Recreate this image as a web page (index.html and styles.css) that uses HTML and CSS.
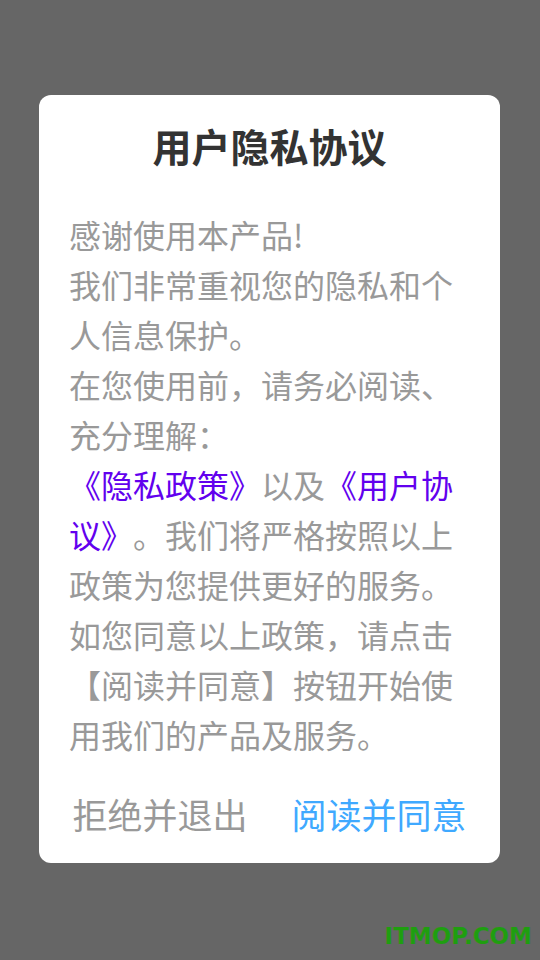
FILE: index.html
```html
<!DOCTYPE html>
<html lang="zh-CN">
<head>
<meta charset="utf-8">
<title>用户隐私协议</title>
<link rel="stylesheet" href="styles.css">
</head>
<body>
<div class="screen">
  <div class="dialog">
    <h1 class="title">用户隐私协议</h1>
    <div class="content">感谢使用本产品!<br>我们非常重视您的隐私和个人信息保护。<br>在您使用前，请务必阅读、充分理解：<br><span class="link">《隐私政策》</span>以及<span class="link">《用户协议》</span>。我们将严格按照以上政策为您提供更好的服务。如您同意以上政策，请点击【阅读并同意】按钮开始使用我们的产品及服务。</div>
    <div class="actions">
      <span class="btn btn-reject">拒绝并退出</span>
      <span class="btn btn-agree">阅读并同意</span>
    </div>
  </div>
  <div class="watermark">ITMOP.COM</div>
</div>
</body>
</html>
```

FILE: styles.css
```css
html, body {
  margin: 0;
  padding: 0;
}
body {
  background: #666666;
  font-family: "Noto Sans CJK SC", "Noto Sans", sans-serif;
  text-spacing-trim: space-all;
}
.screen {
  position: relative;
  width: 540px;
  height: 960px;
  padding-top: 95px;
  box-sizing: border-box;
}
.dialog {
  margin-left: 39px;
  width: 461px;
  height: 768px;
  background: #ffffff;
  border-radius: 12px;
  box-sizing: border-box;
  padding: 25px 30px 0 30px;
  display: flex;
  flex-direction: column;
}
.title {
  margin: 0;
  font-size: 39px;
  line-height: 50px;
  font-weight: 700;
  color: #333333;
  text-align: center;
}
.content {
  margin-top: 39px;
  font-size: 32px;
  line-height: 50px;
  color: #999999;
  text-spacing-trim: space-all;
}
.link {
  color: #6200ee;
}
.actions {
  margin-top: 30px;
  display: flex;
  justify-content: center;
  gap: 44px;
  font-size: 35px;
  line-height: 50px;
}
.btn-reject {
  color: #999999;
}
.btn-agree {
  color: #3fa9ff;
}
.watermark {
  position: absolute;
  right: 8px;
  top: 921px;
  font-family: "DejaVu Sans", sans-serif;
  font-weight: 700;
  font-size: 23px;
  line-height: 30px;
  color: #1f9e10;
}
```
